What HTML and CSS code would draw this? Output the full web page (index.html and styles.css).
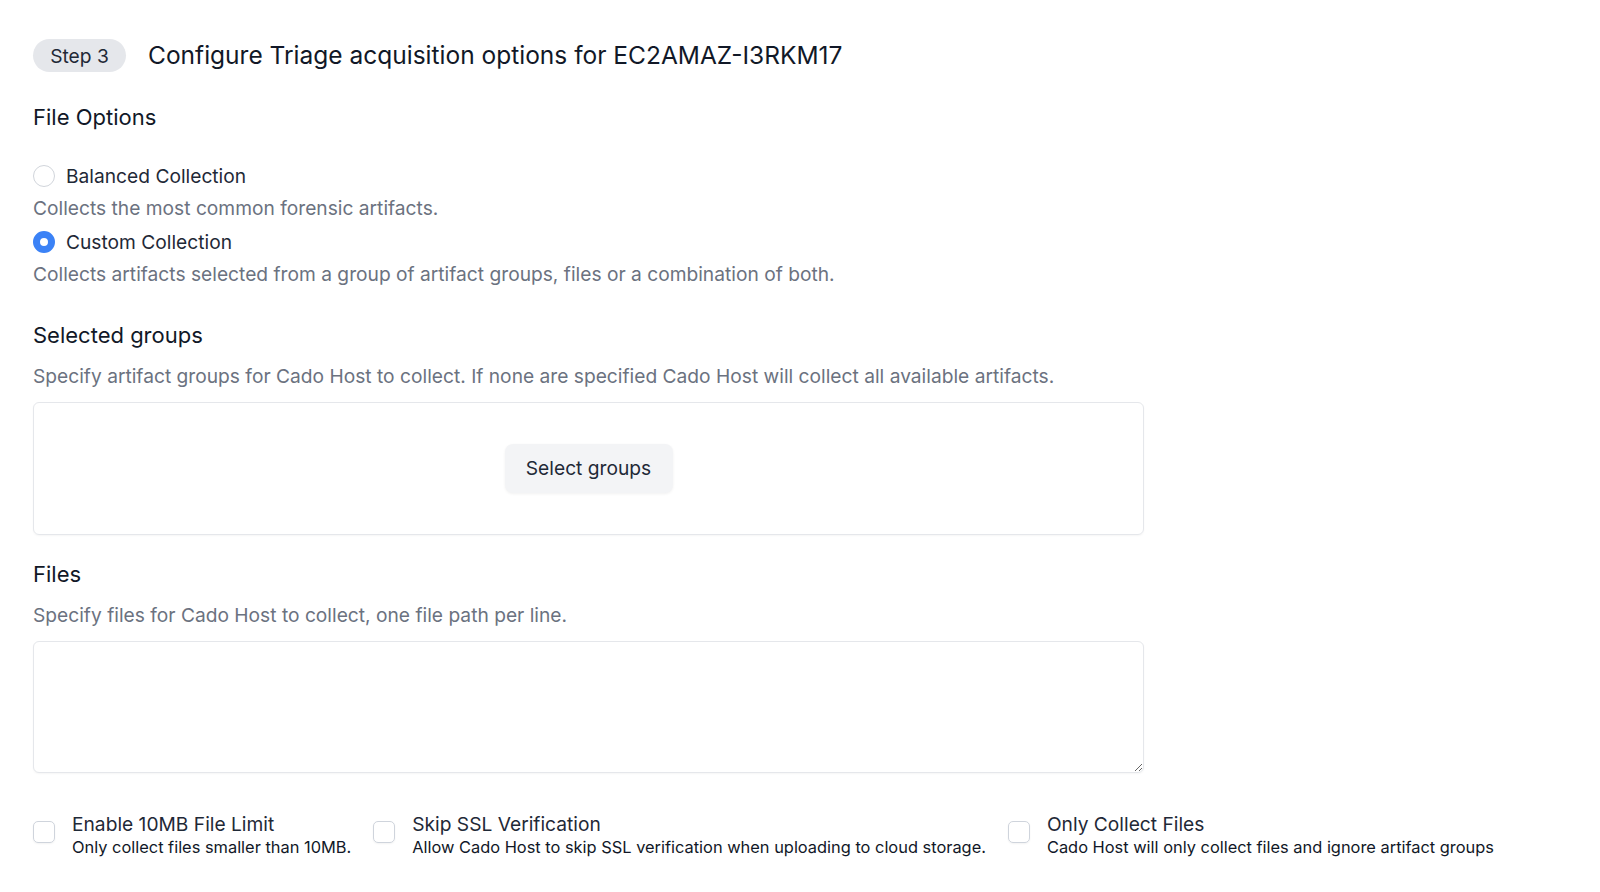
FILE: index.html
```html
<!DOCTYPE html>
<html>
<head>
<meta charset="utf-8">
<link rel="stylesheet" href="styles.css">
</head>
<body>
<div class="page">
  <div class="header">
    <span class="badge">Step 3</span>
    <h1 class="title">Configure Triage acquisition options for EC2AMAZ-I3RKM17</h1>
  </div>

  <h2 class="section-title first">File Options</h2>
  <div class="radios">
    <label class="radio-row"><span class="radio"></span><span class="radio-label">Balanced Collection</span></label>
    <p class="desc">Collects the most common forensic artifacts.</p>
    <label class="radio-row"><span class="radio checked"></span><span class="radio-label">Custom Collection</span></label>
    <p class="desc">Collects artifacts selected from a group of artifact groups, files or a combination of both.</p>
  </div>

  <h2 class="section-title groups">Selected groups</h2>
  <p class="desc help">Specify artifact groups for Cado Host to collect. If none are specified Cado Host will collect all available artifacts.</p>
  <div class="group-box">
    <button class="btn">Select groups</button>
  </div>

  <h2 class="section-title files">Files</h2>
  <p class="desc help">Specify files for Cado Host to collect, one file path per line.</p>
  <textarea class="files-area"></textarea>

  <div class="checks">
    <div class="check-item">
      <span class="checkbox"></span>
      <div class="check-text">
        <div class="check-label">Enable 10MB File Limit</div>
        <div class="check-desc">Only collect files smaller than 10MB.</div>
      </div>
    </div>
    <div class="check-item">
      <span class="checkbox"></span>
      <div class="check-text">
        <div class="check-label">Skip SSL Verification</div>
        <div class="check-desc">Allow Cado Host to skip SSL verification when uploading to cloud storage.</div>
      </div>
    </div>
    <div class="check-item">
      <span class="checkbox"></span>
      <div class="check-text">
        <div class="check-label">Only Collect Files</div>
        <div class="check-desc">Cado Host will only collect files and ignore artifact groups</div>
      </div>
    </div>
  </div>
</div>
</body>
</html>
```

FILE: styles.css
```css
* { box-sizing: border-box; }
html, body { margin: 0; padding: 0; background: #fff; }
body {
  font-family: Inter, "Noto Sans", "Liberation Sans", sans-serif;
  color: #111827;
}
.page {
  padding: 39px 0 0 33px;
  width: 1144px;
}
.header {
  display: flex;
  align-items: center;
  gap: 22px;
  height: 33px;
}
.badge {
  display: inline-flex;
  align-items: center;
  justify-content: center;
  height: 33px;
  width: 93px;
  border-radius: 17px;
  background: #e5e7eb;
  color: #1f2937;
  font-size: 19.2px;
}
.title {
  margin: 0;
  font-size: 24.5px;
  font-weight: 400;
  line-height: 33px;
  color: #111827;
}
.section-title {
  margin: 0;
  font-size: 22px;
  font-weight: 400;
  line-height: 30px;
  color: #111827;
}
.section-title.first { margin-top: 30px; }
.section-title.groups { margin-top: 29px; }
.section-title.files { margin-top: 24px; }
.radios {
  margin-top: 27px;
}
.radio-row {
  display: flex;
  align-items: center;
  gap: 11px;
  height: 33px;
}
.radio {
  width: 22px;
  height: 22px;
  border-radius: 50%;
  border: 1px solid #d1d5db;
  background: #fff;
  flex: none;
}
.radio.checked {
  border: 7px solid #3b82f6;
  background: #fff;
}
.radio-label {
  font-size: 19.2px;
  color: #1f2937;
}
.desc {
  margin: 0;
  font-size: 19.2px;
  line-height: 33px;
  color: #6b7280;
}
.desc.help {
  margin-top: 11px;
  line-height: 30px;
}
.group-box {
  margin-top: 10.5px;
  height: 133px;
  border: 1px solid #e5e7eb;
  border-radius: 6px;
  display: flex;
  align-items: center;
  justify-content: center;
  box-shadow: 0 1px 2px rgba(0,0,0,0.04);
}
.btn {
  font-family: inherit;
  font-size: 19.2px;
  color: #1f2937;
  background: #f3f4f6;
  border: none;
  border-radius: 8px;
  width: 168px;
  height: 49px;
  box-shadow: 0 1px 3px rgba(0,0,0,0.06);
}
.files-area {
  display: block;
  margin-top: 11px;
  width: 100%;
  height: 132px;
  border: 1px solid #e5e7eb;
  border-radius: 6px;
  resize: vertical;
  font-family: inherit;
  font-size: 19.2px;
  outline: none;
  box-shadow: 0 1px 2px rgba(0,0,0,0.04);
}
.checks {
  display: flex;
  gap: 22px;
  margin-top: 38.5px;
  width: 1560px;
}
.check-item {
  display: flex;
  align-items: flex-start;
  gap: 17px;
}
.checkbox {
  width: 22px;
  height: 22px;
  border: 1px solid #cfd4dc;
  border-radius: 5px;
  margin-top: 10px;
  flex: none;
  box-shadow: 0 1px 2px rgba(0,0,0,0.05);
}
.check-label {
  font-size: 19.2px;
  line-height: 26px;
  color: #1f2937;
}
.check-desc {
  font-size: 16.4px;
  line-height: 21px;
  color: #111827;
}
```
